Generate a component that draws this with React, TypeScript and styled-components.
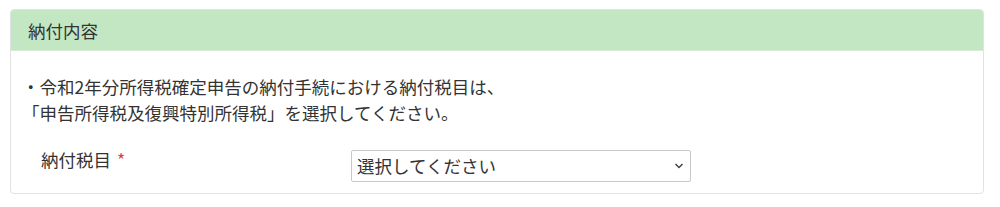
import React from "react";
import styled, { createGlobalStyle } from "styled-components";

const Global = createGlobalStyle`
  html, body { margin: 0; padding: 0; background: #fff; }
  body { font-family: "Noto Sans CJK JP", "Noto Sans", sans-serif; color: #333; }
`;

const Page = styled.div`
  padding: 9px 16px 0 10px;
`;

const Panel = styled.section`
  border: 1px solid #e2e2e2;
  border-radius: 4px;
  background: #fff;
  overflow: hidden;
`;

const PanelHeader = styled.header`
  background: #c3e7c3;
  height: 40px;
  display: flex;
  align-items: center;
  padding: 0 17px;
  font-size: 17.5px;
  font-weight: 400;
  color: #333;
  border-bottom: 1px solid #d6ead6;
`;

const PanelBody = styled.div`
  padding: 23px 11px 11px 11px;
`;

const Note = styled.p`
  margin: 0;
  font-size: 17.5px;
  line-height: 26px;
  font-weight: 400;
  color: #333;
`;

const FieldRow = styled.div`
  display: grid;
  grid-template-columns: 329px 340px;
  align-items: start;
  margin-top: 24px;
`;

const Label = styled.label`
  padding-left: 19px;
  font-size: 17.5px;
  line-height: 20px;
  font-weight: 400;
  color: #333;
`;

const Required = styled.span`
  color: #e53935;
  margin-left: 6px;
`;

const SelectWrap = styled.div`
  position: relative;
  height: 32px;
`;

const Select = styled.select`
  appearance: none;
  -webkit-appearance: none;
  display: block;
  width: 100%;
  height: 32px;
  line-height: 30px;
  border: 1px solid #c8c8c8;
  border-radius: 2px;
  background: #fff;
  font-family: inherit;
  font-size: 17.5px;
  font-weight: 400;
  color: #333;
  padding: 0 24px 0 5px;
  box-sizing: border-box;
  margin: 0;
`;

const Chevron = styled.svg`
  position: absolute;
  right: 7px;
  top: 12px;
  pointer-events: none;
`;

export default function App() {
  return (
    <>
      <Global />
      <Page>
        <Panel>
          <PanelHeader>納付内容</PanelHeader>
          <PanelBody>
            <Note>
              ・令和2年分所得税確定申告の納付手続における納付税目は、
              <br />
              「申告所得税及復興特別所得税」を選択してください。
            </Note>
            <FieldRow>
              <Label>
                納付税目<Required>*</Required>
              </Label>
              <SelectWrap>
                <Select defaultValue="">
                  <option value="">選択してください</option>
                </Select>
                <Chevron width="10" height="8" viewBox="0 0 10 8">
                  <path d="M1.5 2 L5 5.5 L8.5 2" fill="none" stroke="#444" strokeWidth="1.5" />
                </Chevron>
              </SelectWrap>
            </FieldRow>
          </PanelBody>
        </Panel>
      </Page>
    </>
  );
}
